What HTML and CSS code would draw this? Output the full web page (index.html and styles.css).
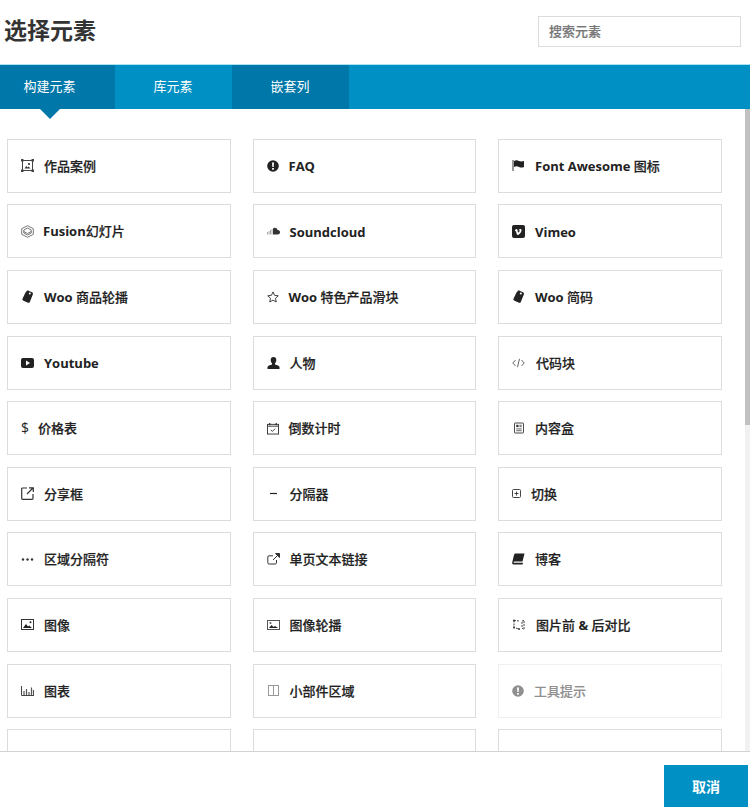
FILE: index.html
```html
<!DOCTYPE html>
<html lang="zh-CN">
<head>
    <meta charset="UTF-8">
    <meta name="viewport" content="width=device-width, initial-scale=1.0">
    <title>选择元素</title>
    <link rel="stylesheet" href="styles.css">
</head>
<body>

<div class="dialog">
    <header class="dialog-header">
        <h1>选择元素</h1>
        <input class="search" type="text" placeholder="搜索元素">
    </header>

    <nav class="tabs">
        <a class="tab tab-first tab-active">构建元素</a>
        <a class="tab">库元素</a>
        <a class="tab tab-dark">嵌套列</a>
    </nav>

    <div class="dialog-body">
        <div class="element-grid">
            <a class="element">
                <svg class="icon" viewBox="0 0 13 13" width="13" height="13"><rect x="1.500" y="1.500" width="10" height="10" fill="none" stroke="#444"/><rect x="0" y="0" width="2.500" height="2.500" fill="#444"/><rect x="10.500" y="0" width="2.500" height="2.500" fill="#444"/><rect x="0" y="10.500" width="2.500" height="2.500" fill="#444"/><rect x="10.500" y="10.500" width="2.500" height="2.500" fill="#444"/><path d="M3.500 9.500l1.800-2.500 1.200 1.500 1-1 2 2z" fill="#333"/><circle cx="8" cy="5" r="1.100" fill="#333"/></svg>
                <span class="label">作品案例</span>
            </a>
            <a class="element">
                <svg class="icon" viewBox="0 0 12 12" width="12" height="12"><circle cx="6" cy="6" r="5.800" fill="#222"/><path d="M5 2.500h2l-.3 4.500H5.300z" fill="#fff"/><rect x="5.100" y="8" width="1.800" height="1.700" fill="#fff"/></svg>
                <span class="label label-latin label-plain">FAQ</span>
            </a>
            <a class="element">
                <svg class="icon" viewBox="0 0 13 13" width="13" height="13"><path d="M1 1v11" stroke="#333" fill="none"/><path d="M2 2c2-1.200 3.500-.8 5 0 1.500.6 3 .6 5 0v6c-2 .8-3.500.7-5 0-1.500-.8-3-1-5 0z" fill="#222"/></svg>
                <span class="label label-latin">Font Awesome <span class="label">图标</span></span>
            </a>

            <a class="element">
                <svg class="icon" viewBox="0 0 13 13" width="13" height="13"><path d="M6.500 .7l5.800 3v5.600l-5.800 3-5.800-3V3.700z" fill="none" stroke="#777"/><path d="M6.500 3l3.700 2v3l-3.700 2-3.700-2V5z" fill="none" stroke="#777"/><path d="M2.800 6.500l3.700 2 3.700-2" fill="none" stroke="#777"/></svg>
                <span class="label label-latin label-tight">Fusion<span class="label">幻灯片</span></span>
            </a>
            <a class="element">
                <svg class="icon" viewBox="0 0 13 8" width="13" height="8"><path d="M6 7.500V1.500c1.800-1.500 4-.5 4.500 1.500 1.500-.2 2.500.8 2.500 2.200 0 1.300-1 2.300-2.300 2.300z" fill="#333"/><path d="M.5 5v2.500M2 4v3.500M3.500 3v4.500M5 2v5.500" stroke="#aaa" fill="none"/></svg>
                <span class="label label-latin label-plain">Soundcloud</span>
            </a>
            <a class="element">
                <svg class="icon" viewBox="0 0 13 13" width="13" height="13"><rect x="0" y="0" width="13" height="13" rx="2" fill="#222"/><path d="M3 5c1.500-1.500 2.300-1.300 2.500 0 .2 1.500.4 2.500.9 2.500.6 0 1.600-1.600 1.300-2.200-.3-.4-1 0-1.200.2.500-1.800 3.100-2.300 3 0-.1 1.800-2.500 4.500-3.700 4.500-1 0-1.300-1.800-1.800-3.500-.2-.6-.4-.7-.9-.3z" fill="#fff"/></svg>
                <span class="label label-latin label-plain">Vimeo</span>
            </a>

            <a class="element">
                <svg class="icon" viewBox="0 0 13 13" width="13" height="13"><path d="M6.500 .3L11.500 2.500 12 4 8.800 12c-.4.800-1 1-1.800.7L2.500 10.800c-1-.5-1.300-1.100-1-2L4.500 2.500z" fill="#222"/><circle cx="8.800" cy="3.500" r="1" fill="#fff"/></svg>
                <span class="label label-latin">Woo <span class="label">商品轮播</span></span>
            </a>
            <a class="element">
                <svg class="icon" viewBox="0 0 13 13" width="12" height="12"><path d="M6.500 1l1.700 3.700 4 .5-3 2.700.8 4-3.500-2-3.500 2 .8-4-3-2.700 4-.5z" fill="none" stroke="#333"/></svg>
                <span class="label label-latin">Woo <span class="label">特色产品滑块</span></span>
            </a>
            <a class="element">
                <svg class="icon" viewBox="0 0 13 13" width="13" height="13"><path d="M6.500 .3L11.500 2.500 12 4 8.800 12c-.4.800-1 1-1.800.7L2.500 10.800c-1-.5-1.300-1.100-1-2L4.500 2.500z" fill="#222"/><circle cx="8.800" cy="3.500" r="1" fill="#fff"/></svg>
                <span class="label label-latin">Woo <span class="label">简码</span></span>
            </a>

            <a class="element">
                <svg class="icon" viewBox="0 0 13 10" width="13" height="10"><rect x="0" y="0" width="13" height="10" rx="2" fill="#222"/><path d="M5 2.500l4 2.500-4 2.500z" fill="#fff"/></svg>
                <span class="label label-latin label-plain">Youtube</span>
            </a>
            <a class="element">
                <svg class="icon" viewBox="0 0 13 12" width="13" height="12"><path d="M6.500 0c1.800 0 2.800 1.300 2.800 3 0 1.300-.5 2.500-1.300 3.300v1.200c2 .6 4.500 1.200 4.500 2.500V12H.5v-2c0-1.300 2.500-1.900 4.500-2.500V6.300C4.200 5.500 3.700 4.300 3.700 3c0-1.700 1-3 2.800-3z" fill="#222"/></svg>
                <span class="label">人物</span>
            </a>
            <a class="element">
                <svg class="icon" viewBox="0 0 13 10" width="13" height="10"><path d="M3.500 2L.8 5l2.700 3M9.500 2l2.700 3-2.700 3M7.500.8L5.500 9.200" fill="none" stroke="#555" stroke-width=".9"/></svg>
                <span class="label label-wide">代码块</span>
            </a>

            <a class="element">
                <span class="icon icon-dollar">$</span>
                <span class="label">价格表</span>
            </a>
            <a class="element">
                <svg class="icon" viewBox="0 0 13 13" width="12" height="13"><rect x=".5" y="2" width="12" height="10.500" fill="none" stroke="#333"/><path d="M1 4h11" stroke="#333" fill="none"/><path d="M3 .5v2.500M10 .5v2.500" stroke="#333" stroke-width="1.300" fill="none"/><path d="M4.200 8l1.600 1.700 3-3" stroke="#333" fill="none"/></svg>
                <span class="label">倒数计时</span>
            </a>
            <a class="element">
                <svg class="icon icon-inset" viewBox="0 0 11 12" width="10" height="12"><rect x=".5" y=".5" width="10" height="11" rx="1" fill="none" stroke="#333"/><rect x="2.500" y="2.500" width="2.500" height="2.500" fill="#333"/><path d="M6 3h2.500M6 4.500h2.500M2.500 7h6M2.500 9h6" stroke="#555" fill="none"/></svg>
                <span class="label label-wide">内容盒</span>
            </a>

            <a class="element">
                <svg class="icon" viewBox="0 0 13 13" width="13" height="13"><path d="M6 1H1.500c-.5 0-.8.3-.8.8v9.700c0 .5.300.8.800.8h9.700c.5 0 .8-.3.800-.8V7" fill="none" stroke="#333" stroke-width="1.200"/><path d="M8 .8h4.300V5M12 1L6 7" fill="none" stroke="#333" stroke-width="1.200"/></svg>
                <span class="label">分享框</span>
            </a>
            <a class="element">
                <svg class="icon" viewBox="0 0 13 13" width="13" height="13"><path d="M3 6.500h7" stroke="#222" stroke-width="1.200" fill="none"/></svg>
                <span class="label">分隔器</span>
            </a>
            <a class="element">
                <svg class="icon" viewBox="0 0 9 9" width="9" height="9"><rect x=".5" y=".5" width="8" height="8" rx="1" fill="none" stroke="#444"/><path d="M2.500 4.500h4M4.500 2.500v4" stroke="#444" fill="none"/></svg>
                <span class="label">切换</span>
            </a>

            <a class="element">
                <svg class="icon" viewBox="0 0 13 13" width="13" height="13"><circle cx="2" cy="6.500" r="1.200" fill="#333"/><circle cx="6.500" cy="6.500" r="1.200" fill="#333"/><circle cx="11" cy="6.500" r="1.200" fill="#333"/></svg>
                <span class="label">区域分隔符</span>
            </a>
            <a class="element">
                <svg class="icon" viewBox="0 0 13 12" width="13" height="12"><path d="M9.500 7v2.800c0 .8-.5 1.200-1.200 1.200H2c-.8 0-1.200-.5-1.200-1.200V4c0-.8.400-1.200 1.200-1.200h4" fill="none" stroke="#333"/><path d="M8.500.5h4v4zM11 2L6 7" fill="#333" stroke="#333"/></svg>
                <span class="label">单页文本链接</span>
            </a>
            <a class="element">
                <svg class="icon" viewBox="0 0 13 12" width="13" height="12"><path d="M3.500.5H12.500L10.500 8.500H2.500c-.8 0-1.200.8-.8 1.300h9.300l-.4 1.700H1.500C.5 11.500 0 10.500.2 9.500L2 2c.2-.8.800-1.500 1.500-1.500z" fill="#222"/></svg>
                <span class="label">博客</span>
            </a>

            <a class="element">
                <svg class="icon" viewBox="0 0 13 11" width="13" height="11"><rect x=".5" y=".5" width="12" height="10" fill="none" stroke="#333"/><path d="M2 9l3-4 2 2.500 1.200-1L11 9z" fill="#222"/><circle cx="9.500" cy="3.300" r="1" fill="#222"/></svg>
                <span class="label">图像</span>
            </a>
            <a class="element">
                <svg class="icon" viewBox="0 0 13 10" width="13" height="10"><rect x=".5" y=".5" width="12" height="9" fill="none" stroke="#555"/><path d="M2 8l2.500-3 2 2 1.500-1 3 2z" fill="#222"/><circle cx="3.500" cy="3" r="1" fill="#555"/></svg>
                <span class="label">图像轮播</span>
            </a>
            <a class="element">
                <svg class="icon" viewBox="0 0 14 13" width="14" height="13"><path d="M2 2.500l5 .5M2 2.500v7l5 1.500M12 2.500l-2 .5v7l2 1.500V2.500" fill="none" stroke="#444" stroke-dasharray="2 1"/><circle cx="2" cy="2.500" r="1" fill="#333"/><circle cx="2" cy="9.500" r="1" fill="#333"/><circle cx="7" cy="11" r="1" fill="#333"/></svg>
                <span class="label">图片前 <span class="label-latin">&amp;</span> 后对比</span>
            </a>

            <a class="element">
                <svg class="icon" viewBox="0 0 13 10" width="13" height="10"><path d="M.5 0v9.500H13" stroke="#444" fill="none"/><path d="M3 5v4M5.500 3v6M8 6v3M10.500 1.500V9M12.500 4v5" stroke="#555" stroke-width="1.200" fill="none"/></svg>
                <span class="label">图表</span>
            </a>
            <a class="element">
                <svg class="icon icon-nudge" viewBox="0 0 11 11" width="11" height="11"><rect x=".5" y=".5" width="10" height="10" fill="none" stroke="#999"/><path d="M5.500 .5v10" stroke="#999" fill="none"/></svg>
                <span class="label label-wide">小部件区域</span>
            </a>
            <a class="element element-faded">
                <svg class="icon" viewBox="0 0 12 12" width="12" height="12"><circle cx="6" cy="6" r="5.800" fill="#222"/><path d="M5 2.500h2l-.3 4.500H5.300z" fill="#fff"/><rect x="5.100" y="8" width="1.800" height="1.700" fill="#fff"/></svg>
                <span class="label">工具提示</span>
            </a>

            <a class="element"></a>
            <a class="element"></a>
            <a class="element"></a>
        </div>
        <div class="scroll-track"><div class="scroll-thumb"></div></div>
    </div>

    <footer class="dialog-footer">
        <button class="button-cancel">取消</button>
    </footer>
</div>

</body>
</html>
```

FILE: styles.css
```css
:root {
    --primary-color: #0090c4;
    --primary-dark: #0077a9;
    --border-color: #dcdcdc;
    --text-color: #333;
}
* {
    box-sizing: border-box;
}
body {
    font-family: 'Open Sans', 'Noto Sans CJK SC', sans-serif;
    margin: 0;
    padding: 0;
    background-color: #fff;
    color: var(--text-color);
}
.dialog {
    height: 811px;
    display: flex;
    flex-direction: column;
    overflow: hidden;
}
.dialog-header {
    height: 64px;
    flex: none;
    display: flex;
    justify-content: space-between;
    align-items: flex-start;
    padding: 16px 9px 0 4px;
}
.dialog-header h1 {
    margin: -1px 0 0;
    font-size: 23px;
    line-height: 31px;
    font-weight: 700;
}
.search {
    width: 203px;
    height: 31px;
    padding: 0 10px 2px;
    border: 1px solid var(--border-color);
    font-family: inherit;
    font-size: 13px;
    font-weight: 500;
    -webkit-text-stroke: 0.2px #777;
    outline: none;
}
.search::placeholder {
    color: #777;
    opacity: 1;
}
.tabs {
    height: 45px;
    flex: none;
    display: flex;
    border-top: 1px solid #a9e2f2;
    background-color: var(--primary-color);
}
.tab {
    position: relative;
    padding: 0 39.5px 0 38.5px;
    line-height: 43px;
    font-size: 13px;
    color: #fff;
}
.tab-first {
    padding-left: 23.5px;
}
.tab-active,
.tab-dark {
    background-color: var(--primary-dark);
}
.tab-active::after {
    content: '';
    position: absolute;
    left: 40px;
    top: 44px;
    border-left: 10px solid transparent;
    border-right: 10px solid transparent;
    border-top: 10px solid var(--primary-dark);
}
.dialog-body {
    height: 642px;
    flex: none;
    display: flex;
    overflow: hidden;
}
.element-grid {
    flex: 1;
    display: grid;
    grid-template-columns: repeat(3, 1fr);
    grid-auto-rows: 54px;
    gap: 11.6px 22px;
    align-content: start;
    padding: 29.8px 23.5px 0 7px;
}
.element {
    display: flex;
    align-items: center;
    padding-left: 13px;
    border: 1px solid var(--border-color);
    color: #222;
}
.element-faded {
    opacity: 0.5;
    border-color: #e0e0e0;
}
.label {
    font-size: 13px;
    font-weight: 500;
    padding-bottom: 1px;
    -webkit-text-stroke: 0.2px #222;
}
.label .label {
    padding-bottom: 0;
}
.label-latin {
    font-weight: 700;
    -webkit-text-stroke: 0;
}
.label-plain {
    padding: 1px 0 0;
}
.label-tight {
    margin-left: -1px;
}
.label-wide {
    margin-left: 1px;
}
.icon {
    flex: none;
    margin-right: 10px;
}
.icon-inset {
    margin-left: 2px;
}
.icon-nudge {
    margin-left: 1px;
}
.icon-dollar {
    font-size: 14px;
    font-weight: 400;
    width: 7px;
    padding-bottom: 2px;
    color: #222;
}
.scroll-track {
    width: 5px;
    flex: none;
    background-color: #f1f1f1;
}
.scroll-thumb {
    height: 316px;
    background-color: #c1c1c1;
}
.dialog-footer {
    flex: 1;
    display: flex;
    justify-content: flex-end;
    align-items: flex-start;
    padding: 13px 2px 0 0;
    border-top: 1px solid #d2d2d2;
}
.button-cancel {
    width: 84px;
    height: 42px;
    border: none;
    background-color: var(--primary-color);
    color: #fff;
    font-family: inherit;
    font-size: 14px;
    font-weight: 700;
}
```
